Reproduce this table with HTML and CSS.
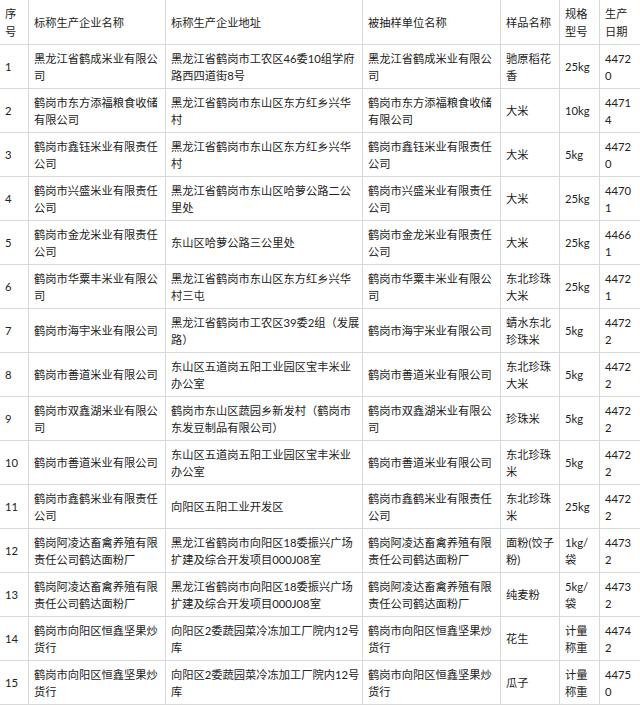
FILE: index.html
```html
<!DOCTYPE html>
<html lang="zh-CN">
<head>
<meta charset="utf-8">
<title>抽样检验信息</title>
<link rel="stylesheet" href="styles.css">
</head>
<body>
<div class="sheet">
  <div class="c">序号</div><div class="c">标称生产企业名称</div><div class="c">标称生产企业地址</div><div class="c">被抽样单位名称</div><div class="c">样品名称</div><div class="c">规格型号</div><div class="c last">生产日期</div>

  <div class="c">1</div><div class="c">黑龙江省鹤成米业有限公司</div><div class="c">黑龙江省鹤岗市工农区46委10组学府路西四道街8号</div><div class="c">黑龙江省鹤成米业有限公司</div><div class="c">驰原稻花香</div><div class="c">25kg</div><div class="c last">44720</div>

  <div class="c">2</div><div class="c">鹤岗市东方添福粮食收储有限公司</div><div class="c">黑龙江省鹤岗市东山区东方红乡兴华村</div><div class="c">鹤岗市东方添福粮食收储有限公司</div><div class="c">大米</div><div class="c">10kg</div><div class="c last">44714</div>

  <div class="c">3</div><div class="c">鹤岗市鑫钰米业有限责任公司</div><div class="c">黑龙江省鹤岗市东山区东方红乡兴华村</div><div class="c">鹤岗市鑫钰米业有限责任公司</div><div class="c">大米</div><div class="c">5kg</div><div class="c last">44720</div>

  <div class="c">4</div><div class="c">鹤岗市兴盛米业有限责任公司</div><div class="c">黑龙江省鹤岗市东山区哈萝公路二公里处</div><div class="c">鹤岗市兴盛米业有限责任公司</div><div class="c">大米</div><div class="c">25kg</div><div class="c last">44701</div>

  <div class="c">5</div><div class="c">鹤岗市金龙米业有限责任公司</div><div class="c">东山区哈萝公路三公里处</div><div class="c">鹤岗市金龙米业有限责任公司</div><div class="c">大米</div><div class="c">25kg</div><div class="c last">44661</div>

  <div class="c">6</div><div class="c">鹤岗市华粟丰米业有限公司</div><div class="c">黑龙江省鹤岗市东山区东方红乡兴华村三屯</div><div class="c">鹤岗市华粟丰米业有限公司</div><div class="c">东北珍珠大米</div><div class="c">25kg</div><div class="c last">44721</div>

  <div class="c">7</div><div class="c">鹤岗市海宇米业有限公司</div><div class="c">黑龙江省鹤岗市工农区39委2组（发展路）</div><div class="c">鹤岗市海宇米业有限公司</div><div class="c">蜻水东北珍珠米</div><div class="c">5kg</div><div class="c last">44722</div>

  <div class="c">8</div><div class="c">鹤岗市善道米业有限公司</div><div class="c">东山区五道岗五阳工业园区宝丰米业办公室</div><div class="c">鹤岗市善道米业有限公司</div><div class="c">东北珍珠大米</div><div class="c">5kg</div><div class="c last">44722</div>

  <div class="c">9</div><div class="c">鹤岗市双鑫湖米业有限公司</div><div class="c">鹤岗市东山区蔬园乡新发村（鹤岗市东发豆制品有限公司）</div><div class="c">鹤岗市双鑫湖米业有限公司</div><div class="c">珍珠米</div><div class="c">5kg</div><div class="c last">44722</div>

  <div class="c">10</div><div class="c">鹤岗市善道米业有限公司</div><div class="c">东山区五道岗五阳工业园区宝丰米业办公室</div><div class="c">鹤岗市善道米业有限公司</div><div class="c">东北珍珠米</div><div class="c">5kg</div><div class="c last">44722</div>

  <div class="c">11</div><div class="c">鹤岗市鑫鹤米业有限责任公司</div><div class="c">向阳区五阳工业开发区</div><div class="c">鹤岗市鑫鹤米业有限责任公司</div><div class="c">东北珍珠米</div><div class="c">25kg</div><div class="c last">44722</div>

  <div class="c">12</div><div class="c">鹤岗阿凌达畜禽养殖有限责任公司鹤达面粉厂</div><div class="c">黑龙江省鹤岗市向阳区18委振兴广场扩建及综合开发项目000J08室</div><div class="c">鹤岗阿凌达畜禽养殖有限责任公司鹤达面粉厂</div><div class="c">面粉(饺子粉)</div><div class="c">1kg/袋</div><div class="c last">44732</div>

  <div class="c">13</div><div class="c">鹤岗阿凌达畜禽养殖有限责任公司鹤达面粉厂</div><div class="c">黑龙江省鹤岗市向阳区18委振兴广场扩建及综合开发项目000J08室</div><div class="c">鹤岗阿凌达畜禽养殖有限责任公司鹤达面粉厂</div><div class="c">纯麦粉</div><div class="c">5kg/袋</div><div class="c last">44732</div>

  <div class="c">14</div><div class="c">鹤岗市向阳区恒鑫坚果炒货行</div><div class="c">向阳区2委蔬园菜冷冻加工厂院内12号库</div><div class="c">鹤岗市向阳区恒鑫坚果炒货行</div><div class="c">花生</div><div class="c">计量称重</div><div class="c last">44742</div>

  <div class="c">15</div><div class="c">鹤岗市向阳区恒鑫坚果炒货行</div><div class="c">向阳区2委蔬园菜冷冻加工厂院内12号库</div><div class="c">鹤岗市向阳区恒鑫坚果炒货行</div><div class="c">瓜子</div><div class="c">计量称重</div><div class="c last">44750</div>
</div>
</body>
</html>
```

FILE: styles.css
```css
html, body {
  margin: 0;
  padding: 0;
  background: #ffffff;
  overflow: hidden;
}

.sheet {
  display: grid;
  grid-template-columns: 28px 136px 196px 137px 58px 39px 40px;
  grid-template-rows: 44px;
  grid-auto-rows: 43px;
  gap: 1px;
  width: 640px;
  padding-bottom: 1px;
  background: #d9d9d9;
}

.c {
  display: flex;
  align-items: center;
  padding: 1px 2px 0 5px;
  background: #ffffff;
  color: #222222;
  font-family: Lato, "Noto Sans CJK SC", sans-serif;
  font-size: 11.25px;
  line-height: 17.5px;
  word-break: break-all;
  overflow-wrap: anywhere;
  overflow: hidden;
}

.last {
  padding-right: 6px;
}
```
